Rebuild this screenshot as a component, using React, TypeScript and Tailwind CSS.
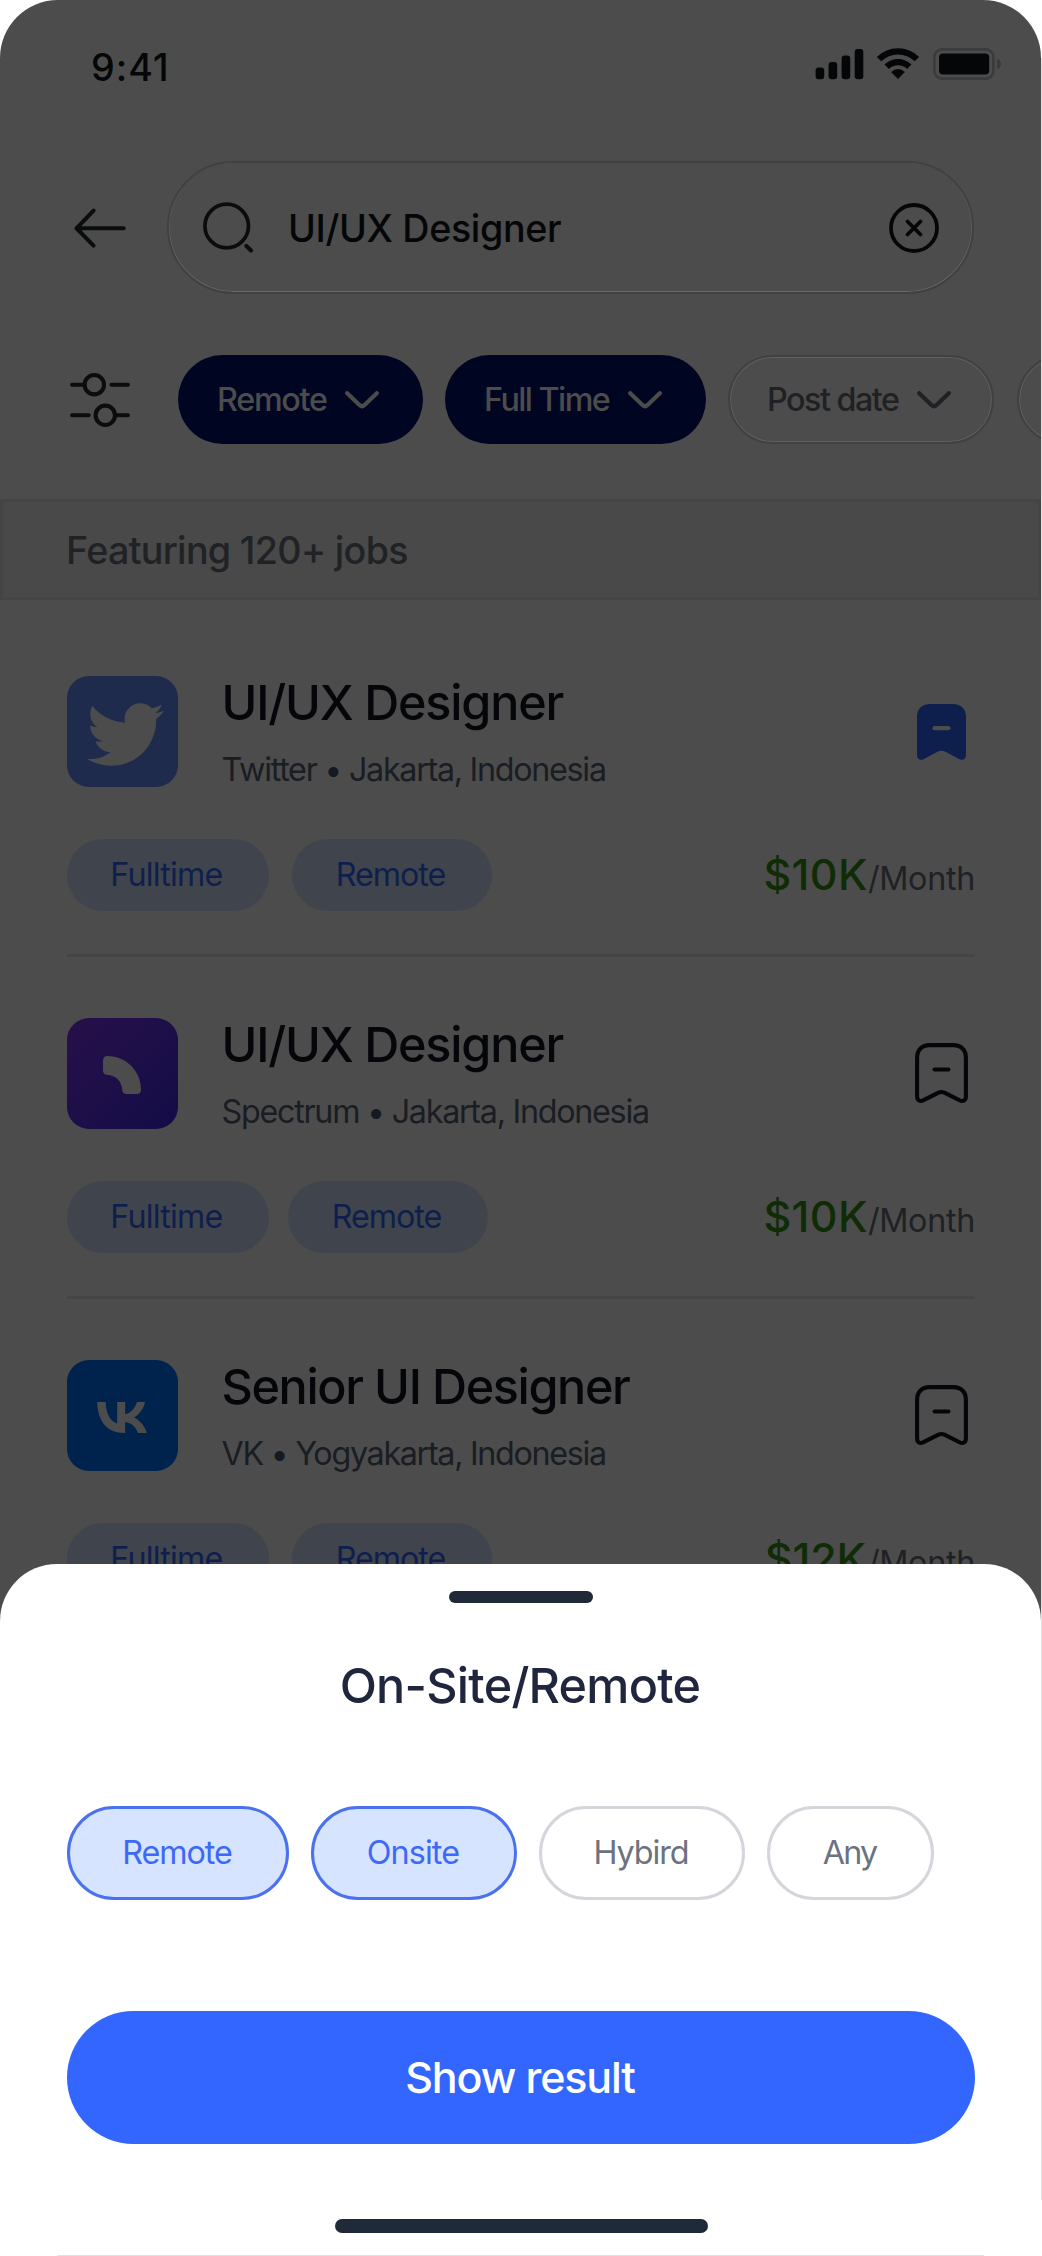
import React from "react";
import { FaTwitter } from "react-icons/fa";

type Job = {
  title: string;
  titleClass: string;
  company: string;
  place: string;
  textClass: string;
  logo: React.ReactNode;
  saved?: boolean;
  tagGap: string;
  amount: string;
  amountClass: string;
};

function SignalIcon() {
  return (
    <svg width="49" height="32" viewBox="0 0 49 32" fill="#050608">
      <rect x="0.6" y="19.5" width="8.6" height="11.7" rx="3" />
      <rect x="13.6" y="14" width="8.6" height="17.2" rx="3" />
      <rect x="26.6" y="7.5" width="8.6" height="23.7" rx="3" />
      <rect x="39.7" y="1" width="8.6" height="30.2" rx="3" />
    </svg>
  );
}

function WifiIcon() {
  return (
    <svg width="44" height="32" viewBox="0 0 44 32" fill="none" stroke="#050608">
      <path d="M3.1 11.1A26.75 26.75 0 0 1 40.9 11.1" strokeWidth="6.2" />
      <path d="M10.7 18.7A16 16 0 0 1 33.3 18.7" strokeWidth="6.2" />
      <path d="M15.6 24a9.6 9.6 0 0 1 12.8 0L22 30.6z" fill="#050608" strokeWidth="0.8" strokeLinejoin="round" />
    </svg>
  );
}

function BatteryIcon() {
  return (
    <svg width="69" height="32" viewBox="0 0 69 32" fill="none">
      <rect x="1.4" y="1.4" width="59" height="29.2" rx="7.5" stroke="#3a3b3c" strokeWidth="2.6" />
      <rect x="6" y="5.6" width="50.2" height="20.8" rx="4" fill="#050608" />
      <path d="M64 10.6c2.6 1.2 4 3 4 5.4s-1.4 4.2-4 5.4z" fill="#3a3b3c" />
    </svg>
  );
}

function Chevron({ color }: { color: string }) {
  return (
    <svg width="34" height="18" viewBox="0 0 34 18" fill="none" stroke={color} strokeWidth="4.2" strokeLinecap="round">
      <path d="M2.2 2.2L14.7 14.2Q17 16.2 19.3 14.2L31.8 2.2" />
    </svg>
  );
}

function SlidersIcon() {
  return (
    <svg className="shrink-0" width="60" height="56" viewBox="0 0 60 56" fill="none" stroke="#0b0c0e" strokeWidth="4.1" strokeLinecap="round">
      <path d="M2.1 12.7H13M41.5 12.7H57.9M2.1 43.3H18.7M47 43.3H57.9" />
      <circle cx="24.3" cy="12.7" r="9.7" />
      <circle cx="35.3" cy="43.3" r="9.7" />
    </svg>
  );
}

function Bookmark({ saved }: { saved?: boolean }) {
  if (saved) {
    return (
      <svg width="49" height="56" viewBox="0 0 49 56">
        <path
          d="M0 51V13C0 5 5 0 13 0H36C44 0 49 5 49 13V51C49 55.5 45.5 57 41.5 54.8L28 47.6Q24.5 45.8 21 47.6L7.5 54.8C3.5 57 0 55.5 0 51Z"
          fill="#0f1f4d"
        />
        <path d="M17.6 24.2H31.4" stroke="#4c4c4c" strokeWidth="4.3" strokeLinecap="round" />
      </svg>
    );
  }
  return (
    <svg width="53" height="61" viewBox="0 0 53 61" fill="none" stroke="#050609" strokeWidth="4.1" strokeLinejoin="round">
      <path d="M2.1 53.5V14.5C2.1 7 7 2.1 14.5 2.1H38.5C46 2.1 50.9 7 50.9 14.5V53.5C50.9 57.5 48 59 44.5 57.2L29.5 49.7Q26.5 48.3 23.5 49.7L8.5 57.2C5 59 2.1 57.5 2.1 53.5Z" />
      <path d="M19.6 26.5H33.4" strokeLinecap="round" />
    </svg>
  );
}

const jobs: Job[] = [
  {
    title: "UI/UX Designer",
    titleClass: "tracking-[-1.19px]",
    company: "Twitter",
    place: "Jakarta, Indonesia",
    textClass: "tracking-[-1.3px]",
    logo: (
      <div className="flex size-[111px] items-center justify-center rounded-[22px] bg-[#1f2b4d] pt-[6px] pl-[6px] text-[#4c4c4c]">
        <FaTwitter size={77} />
      </div>
    ),
    saved: true,
    tagGap: "gap-[23px]",
    amount: "$10K",
    amountClass: "tracking-[0.4px]",
  },
  {
    title: "UI/UX Designer",
    titleClass: "tracking-[-1.19px]",
    company: "Spectrum",
    place: "Jakarta, Indonesia",
    textClass: "tracking-[-1.28px]",
    logo: (
      <div className="flex size-[111px] items-center justify-center rounded-[22px] bg-linear-to-br from-[#27104a] to-[#130c47] pt-[3px]">
        <svg width="38" height="38" viewBox="0 0 38 38" fill="#4c4c4c">
          <path d="M4.5 0C23 0 38 15 38 33.5Q38 38 34 38H23.5Q19.5 38 19.3 34C18.5 25 13 19.5 4 18.8Q0 18.5 0 14.5V4.5Q0 0 4.5 0Z" />
        </svg>
      </div>
    ),
    tagGap: "gap-[19px]",
    amount: "$10K",
    amountClass: "tracking-[0.4px]",
  },
  {
    title: "Senior UI Designer",
    titleClass: "tracking-[-1.37px]",
    company: "VK",
    place: "Yogyakarta, Indonesia",
    textClass: "tracking-[-1.32px]",
    logo: (
      <div className="flex size-[111px] items-center justify-center rounded-[22px] bg-[#00234d] pt-[4px]">
        <svg width="50" height="31" viewBox="4.05 7.3 16.01 9.99" fill="#4c4c4c">
          <path d="M6.79 7.3H4.05c.13 6.24 3.25 9.99 8.72 9.99h.31v-3.57c2.01.2 3.53 1.67 4.14 3.57h2.84c-.78-2.84-2.83-4.41-4.11-5.01 1.28-.74 3.08-2.54 3.51-4.98h-2.58c-.56 1.98-2.22 3.78-3.8 3.95V7.3H10.5v6.92c-1.6-.4-3.62-2.34-3.71-6.92Z" />
        </svg>
      </div>
    ),
    tagGap: "gap-[23px]",
    amount: "$12K",
    amountClass: "mr-[2px] tracking-[-0.14px]",
  },
];

function JobCard({ job }: { job: Job }) {
  return (
    <article>
      <div className="flex h-[111px] items-center">
        {job.logo}
        <div className="ml-[44px] flex-1 pt-[8px] whitespace-nowrap">
          <h2 className={`text-[48.5px] leading-[68px] font-medium text-[#050609] ${job.titleClass}`}>{job.title}</h2>
          <p className={`text-[32.3px] leading-[66px] text-[#1a1d23] ${job.textClass}`}>
            {job.company} <span className="text-[#151a22]">•</span> {job.place}
          </p>
        </div>
        <div className="flex w-[67px] justify-center">
          <Bookmark saved={job.saved} />
        </div>
      </div>
      <div className="mt-[52px] flex h-[72px] items-center justify-between">
        <div className={`flex text-[32.3px] text-[#0f1f4d] ${job.tagGap}`}>
          <span className="flex h-[72px] w-[202px] items-center justify-center rounded-full bg-[#40444c] pr-[2px] tracking-[-0.8px]">Fulltime</span>
          <span className="flex h-[72px] w-[200px] items-center justify-center rounded-full bg-[#40444c] pr-[2px] tracking-[-1.05px]">Remote</span>
        </div>
        <div className="flex items-baseline pt-[2px] leading-[70px]">
          <span className={`text-[43px] font-medium text-[#0f2c07] ${job.amountClass}`}>{job.amount}</span>
          <span className="text-[32.3px] tracking-[-0.31px] text-[#1f2124]">/Month</span>
        </div>
      </div>
    </article>
  );
}

const filters = [
  { label: "Remote", active: true, size: "w-[245px] pl-[39px] pr-[44px]", spacing: "tracking-[-1.27px]" },
  { label: "Full Time", active: true, size: "w-[261px] pl-[39px] pr-[44px]", spacing: "tracking-[-1.55px]" },
  { label: "Post date", active: false, size: "w-[266px] pl-[37px] pr-[41px]", spacing: "tracking-[-1.5px]" },
];

const options = [
  { label: "Remote", selected: true, size: "w-[222px]", spacing: "tracking-[-1.1px]" },
  { label: "Onsite", selected: true, size: "w-[206px]", spacing: "tracking-[-0.9px]" },
  { label: "Hybird", selected: false, size: "w-[206px]", spacing: "tracking-[-1.1px]" },
  { label: "Any", selected: false, size: "w-[167px]", spacing: "tracking-[-1.8px]" },
];

export default function App() {
  return (
    <div className="h-[2256px] w-[1042px] bg-white font-['Inter',sans-serif]">
      <div className="flex">
        <div className="relative h-[2255px] w-[1041px] overflow-hidden rounded-t-[58px] bg-[#4c4c4c]">
          <header>
            <div className="flex h-[134px] items-center justify-between pr-[39px] pl-[91px]">
              <span className="text-[37.7px] leading-[54px] font-medium tracking-[1px] text-[#050608]">9:41</span>
              <div className="flex items-center pb-[6px]">
                <SignalIcon />
                <div className="ml-[12px]">
                  <WifiIcon />
                </div>
                <div className="ml-[13px]">
                  <BatteryIcon />
                </div>
              </div>
            </div>

            <div className="mt-[27px] flex items-center pr-[67px] pl-[74px]">
              <svg width="52" height="40" viewBox="0 0 52 40" fill="none" stroke="#0b0c0e" strokeWidth="4.1" strokeLinecap="round" strokeLinejoin="round">
                <path d="M49.7 20.3H2.5M19.5 2.6L2.5 20.3L19.5 37.6" />
              </svg>
              <div className="ml-[41px] flex h-[133px] flex-1 items-center rounded-full border-2 border-[#414141] pr-[33px] pl-[34px] shadow-[inset_0_-0.5px_0_0.5px_#6a6a6a]">
                <svg width="51" height="51" viewBox="0 0 51 51" fill="none" stroke="#0b0c0e">
                  <circle cx="23.7" cy="24" r="21.8" strokeWidth="3.7" />
                  <path d="M43.3 43.8L48 48.5" strokeWidth="4" strokeLinecap="round" />
                </svg>
                <span className="ml-[34px] flex-1 pt-[2px] text-[37.7px] font-medium tracking-[-0.36px] text-[#050608]">UI/UX Designer</span>
                <svg width="50" height="50" viewBox="0 0 50 50" fill="none" stroke="#050608" strokeWidth="3.8" strokeLinecap="round">
                  <circle cx="25" cy="25" r="23" />
                  <path d="M18.5 18.5L31.5 31.5M31.5 18.5L18.5 31.5" />
                </svg>
              </div>
            </div>

            <div className="mt-[61px] flex items-center pl-[70px]">
              <SlidersIcon />
              <div className="ml-[48px] flex gap-[22px] text-[32.3px] font-medium">
                {filters.map((f) => (
                  <div
                    key={f.label}
                    className={`flex h-[89px] shrink-0 items-center justify-between rounded-full whitespace-nowrap ${f.size} ${
                      f.active
                        ? "bg-[#000521] text-[#4c4c4c]"
                        : "border-2 border-[#414141] text-[#1f2124] shadow-[inset_0_0_0_1px_#606060]"
                    }`}
                  >
                    <span className={`pt-[2px] ${f.spacing}`}>{f.label}</span>
                    <Chevron color={f.active ? "#4c4c4c" : "#1f2124"} />
                  </div>
                ))}
                <div className="ml-[1px] h-[89px] w-[245px] shrink-0 rounded-full border-2 border-[#414141] shadow-[inset_0_0_0_1px_#606060]" />
              </div>
            </div>
          </header>

          <div className="mt-[55px] flex h-[101px] items-center border-[3px] border-[#454546] bg-[#494949] pt-[1px] pl-[63px] text-[37.7px] font-medium tracking-[-0.7px] text-[#202225]">
            Featuring 120+ jobs
          </div>

          <main className="flex flex-col pt-[76px] pr-[66px] pl-[66.5px]">
            {jobs.map((job, i) => (
              <React.Fragment key={job.company}>
                {i > 0 && <hr className="mt-[43px] mb-[61px] border-t-[3px] border-[#454546]" />}
                <JobCard job={job} />
              </React.Fragment>
            ))}
          </main>

          <section className="absolute inset-x-0 bottom-0 flex h-[691px] flex-col rounded-t-[57px] bg-white pt-[27px] pr-[66px] pl-[67px]">
            <div className="h-[12px] w-[144px] self-center rounded-full bg-[#1f2937]" />
            <h1 className="mt-[53px] pr-[2px] text-center text-[48.5px] leading-[60px] font-medium tracking-[-0.73px] text-[#20263d]">
              On-Site/Remote
            </h1>
            <div className="mt-[90px] flex gap-[22px] text-[32.3px]">
              {options.map((o) => (
                <span
                  key={o.label}
                  className={`flex h-[94px] items-center justify-center rounded-full border-[3px] pt-[1px] pr-[2px] ${o.size} ${o.spacing} ${
                    o.selected ? "border-[#4a71ee] bg-[#d6e4ff] text-[#3c69f5]" : "border-[#d4d6dc] text-[#6b7280]"
                  }`}
                >
                  {o.label}
                </span>
              ))}
            </div>
            <button className="mt-[111px] h-[133px] rounded-full bg-[#3366ff] pr-[2px] text-[43px] font-medium tracking-[-1.15px] text-white">
              Show result
            </button>
            <div className="mt-[75px] ml-[1px] h-[14px] w-[373px] self-center rounded-full bg-[#1f2937]" />
          </section>
        </div>
        <div className="mt-[58px] mb-[55px] w-px bg-[#e0e0e0]" />
      </div>
      <div className="mx-[58px] h-px bg-[#e0e0e0]" />
    </div>
  );
}
